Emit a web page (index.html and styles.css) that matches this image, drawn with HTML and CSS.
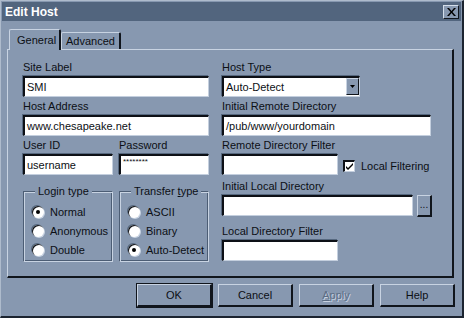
FILE: index.html
```html
<!DOCTYPE html>
<html>
<head>
<meta charset="utf-8">
<link rel="stylesheet" href="styles.css">
</head>
<body>
<div class="window">
  <div class="titlebar">
    <span class="title">Edit Host</span>
    <span class="close"><svg width="9" height="8" viewBox="0 0 9 8"><path d="M0 0h2l2.5 3 2.5-3h2L5.5 4 9 8H7L4.5 5 2 8H0l3.5-4z" fill="#000"/></svg></span>
  </div>
  <div class="tabs">
    <div class="tab active">General</div>
    <div class="tab">Advanced</div>
  </div>
  <div class="panel">
    <div class="col left">
      <div class="field">
        <div class="label">Site Label</div>
        <div class="input w186">SMI</div>
      </div>
      <div class="field">
        <div class="label">Host Address</div>
        <div class="input w186">www.chesapeake.net</div>
      </div>
      <div class="row">
        <div class="field">
          <div class="label">User ID</div>
          <div class="input w90">username</div>
        </div>
        <div class="field">
          <div class="label">Password</div>
          <div class="input w90 pw">********</div>
        </div>
      </div>
      <div class="row groups">
        <div class="group">
          <span class="legend">Login type</span>
          <div class="radio"><span class="dot on"></span>Normal</div>
          <div class="radio"><span class="dot"></span>Anonymous</div>
          <div class="radio"><span class="dot"></span>Double</div>
        </div>
        <div class="group">
          <span class="legend">Transfer <u>t</u>ype</span>
          <div class="radio"><span class="dot"></span>ASCII</div>
          <div class="radio"><span class="dot"></span>Binary</div>
          <div class="radio"><span class="dot on"></span>Auto-Detect</div>
        </div>
      </div>
    </div>
    <div class="col right">
      <div class="field">
        <div class="label">Host Type</div>
        <div class="input select w139">Auto-Detect<span class="drop"><svg width="5" height="3" viewBox="0 0 5 3"><path d="M0 0h5L2.5 3z" fill="#000"/></svg></span></div>
      </div>
      <div class="field">
        <div class="label">Initial Remote Directory</div>
        <div class="input w210">/pub/www/yourdomain</div>
      </div>
      <div class="row">
        <div class="field">
          <div class="label">Remote Directory Filter</div>
          <div class="input w116"></div>
        </div>
        <div class="check"><span class="box"><svg width="9" height="9" viewBox="0 0 9 9"><path d="M1 4l2 2 5-5v2L3 8 1 6z" fill="#000"/></svg></span>Local Filtering</div>
      </div>
      <div class="field sp1">
        <div class="label">Initial Local Directory</div>
        <div class="row tight">
          <div class="input w191"></div>
          <div class="browse">...</div>
        </div>
      </div>
      <div class="field sp2">
        <div class="label">Local Directory Filter</div>
        <div class="input w116"></div>
      </div>
    </div>
  </div>
  <div class="buttons">
    <div class="btn default">OK</div>
    <div class="btn">Cancel</div>
    <div class="btn disabled"><u>A</u>pply</div>
    <div class="btn">Help</div>
  </div>
</div>
</body>
</html>
```
FILE: styles.css
```css
* { box-sizing: border-box; }
html, body { margin: 0; padding: 0; }
body {
  width: 464px; height: 318px; overflow: hidden;
  font-family: "Liberation Sans", Arial, sans-serif;
  font-size: 11px; color: #0c0f14;
  background: #8798b0;
}
.window {
  width: 464px; height: 318px;
  background: #8798b0;
  border-top: 1px solid #aebbcc;
  border-left: 1px solid #aebbcc;
  border-right: 2px solid #1c2430;
  border-bottom: 2px solid #1c2430;
  padding: 1px;
}
.titlebar {
  height: 19px;
  background: #52657e;
  display: flex; align-items: center; justify-content: space-between;
  padding: 0 2px 0 3px;
}
.title { color: #fff; font-weight: bold; font-size: 12px; }
.close {
  width: 16px; height: 14px;
  background: #8798b0;
  border-top: 1px solid #d4deea; border-left: 1px solid #d4deea;
  border-right: 1px solid #10151c; border-bottom: 1px solid #10151c;
  display: flex; align-items: center; justify-content: center;
}
.tabs {
  display: flex; align-items: flex-end;
  height: 28px;
  padding-left: 7px;
}
.tab {
  height: 17px; padding: 0 4px 0 4px; line-height: 16px;
  font-size: 11px;
  border-top: 1px solid #c8d3e2; border-left: 1px solid #c8d3e2;
  border-right: 2px solid #10151c;
  border-radius: 2px 2px 0 0;
}
.tab.active {
  height: 21px; width: 52px; padding: 3px 0 0 7px; line-height: 14px;
  margin-bottom: -1px; position: relative; z-index: 1;
  background: #8798b0;
}
.panel {
  width: 447px; height: 229px;
  margin-left: 5px;
  border-top: 1px solid #c8d3e2; border-left: 1px solid #c8d3e2;
  border-right: 2px solid #10151c; border-bottom: 2px solid #10151c;
  display: flex; gap: 13px;
  padding: 10px 0 0 15px;
}
.col { display: flex; flex-direction: column; gap: 2px; }
.left { width: 186px; }
.right { width: 212px; }
.row { display: flex; gap: 6px; align-items: flex-start; }
.row.tight { gap: 4px; }
.field { display: flex; flex-direction: column; }
.label { height: 16px; line-height: 15px; white-space: nowrap; }
.input {
  height: 21px; background: #fff;
  border-top: 2px solid #0d1016; border-left: 2px solid #0d1016;
  border-right: 1px solid #c4cfde; border-bottom: 1px solid #c4cfde;
  box-shadow: -1px -1px 0 #56687f;
  padding: 2px 3px 0 2px; line-height: 15px; font-size: 11px;
  white-space: nowrap; overflow: hidden;
}
.pw { font-size: 8px; line-height: 10px; padding-top: 1px; }
.w186 { width: 186px; }
.w90 { width: 90px; }
.w139 { width: 138px; }
.w210 { width: 209px; }
.w116 { width: 116px; }
.w191 { width: 191px; }
.select { display: flex; justify-content: space-between; padding-right: 0; padding-top: 2px; overflow: visible; }
.drop {
  width: 13px; height: 17px; margin-top: -2px;
  background: #8798b0;
  border-top: 1px solid #c8d3e2; border-left: 1px solid #c8d3e2;
  border-right: 1px solid #10151c; border-bottom: 1px solid #10151c;
  display: flex; align-items: center; justify-content: center;
}
.check {
  display: flex; align-items: center; margin-top: 22px; gap: 6px;
  margin-left: -1px; white-space: nowrap; flex-shrink: 0;
}
.box {
  width: 12px; height: 12px; background: #fff;
  border-top: 2px solid #0d1016; border-left: 2px solid #0d1016;
  border-right: 1px solid #c4cfde; border-bottom: 1px solid #c4cfde;
  display: flex; align-items: center; justify-content: center;
}
.sp1 { margin-top: 2px; }
.sp2 { margin-top: 5px; }
.browse {
  width: 15px; height: 22px;
  border-top: 1px solid #c8d3e2; border-left: 1px solid #c8d3e2;
  border-right: 2px solid #10151c; border-bottom: 2px solid #10151c;
  text-align: center; line-height: 18px; font-size: 10px;
}
.groups { margin-top: 14px; gap: 6px; }
.group {
  width: 90px; height: 71px; padding: 10px 0 0 8px;
  border-top: 1px solid #4c5d74; border-left: 1px solid #4c5d74;
  border-right: 1px solid #c8d3e2; border-bottom: 1px solid #c8d3e2;
  box-shadow: inset 1px 1px 0 #c8d3e2, inset -1px -1px 0 #4c5d74;
  display: flex; flex-direction: column;
}
.legend {
  align-self: flex-start;
  margin: -18px 0 3px 3px; padding: 0 3px;
  background: #8798b0; line-height: 15px; height: 15px;
}
.radio { display: flex; align-items: center; height: 19px; gap: 6px; white-space: nowrap; }
.dot {
  width: 12px; height: 12px; border-radius: 50%;
  background: #fff;
  box-shadow: inset 1px 1px 0 #0d1016, -1px -1px 0 #56687f, 1px 1px 0 #c8d3e2;
  display: flex; align-items: center; justify-content: center;
  flex-shrink: 0;
}
.dot.on::after { content: ""; width: 4px; height: 4px; border-radius: 50%; background: #000; }
.buttons {
  display: flex; justify-content: flex-end; gap: 6px;
  padding: 6px 6px 0 0;
}
.btn {
  width: 75px; height: 23px;
  border-top: 1px solid #c8d3e2; border-left: 1px solid #c8d3e2;
  border-right: 2px solid #10151c; border-bottom: 2px solid #10151c;
  text-align: center; line-height: 20px; font-size: 11px;
}
.btn.default { outline: 1px solid #10151c; }
.btn.disabled { color: #5c6d84; text-shadow: 1px 1px 0 #c8d3e2; }
u { text-decoration: underline; }
```
